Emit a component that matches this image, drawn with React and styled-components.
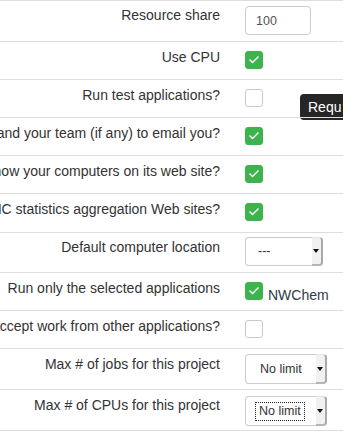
import React from "react";
import styled, { createGlobalStyle } from "styled-components";

const Global = createGlobalStyle`
  html, body { margin: 0; padding: 0; background: #fff; overflow: hidden; }
  body { font-family: "Liberation Sans", Arial, sans-serif; font-size: 14px; color: #333; }
`;

const Table = styled.div`
  width: 343px;
  overflow: hidden;
  border-bottom: 1px solid #ddd;
`;

const Row = styled.div`
  position: relative;
  display: grid;
  grid-template-columns: 237px 1fr;
  height: ${(p) => p.$h}px;
  border-top: 1px solid #ddd;
  box-sizing: content-box;
`;

const Label = styled.div`
  display: flex;
  justify-content: flex-end;
  overflow: hidden;
  padding: ${(p) => p.$pt ?? 5}px 17px 0 0;
  line-height: 20px;
  white-space: nowrap;
  color: #333;
`;

const Control = styled.div`
  display: flex;
  align-items: flex-start;
  padding: ${(p) => p.$pt}px 0 0 8px;
  min-width: 0;
`;

const TextInput = styled.div`
  box-sizing: border-box;
  width: 66px;
  height: 29px;
  border: 1px solid #ccc;
  border-radius: 4px;
  padding: 0 10px;
  font-size: 12.5px;
  line-height: 28px;
  color: #555;
`;

const Box = styled.span`
  box-sizing: border-box;
  display: inline-flex;
  align-items: center;
  justify-content: center;
  width: 18px;
  height: 18px;
  flex: none;
  border-radius: 3px;
  background: ${(p) => (p.$on ? "#3cb44b" : "#fff")};
  border: 1px solid ${(p) => (p.$on ? "#3cb44b" : "#c5cad1")};
`;

const CheckLabel = styled.span`
  margin: 3px 0 0 5px;
  line-height: 20px;
  color: #2d3a4a;
`;

const SelectBox = styled.div`
  box-sizing: border-box;
  display: flex;
  width: ${(p) => p.$w}px;
  height: ${(p) => p.$hgt}px;
  border: 1px solid #ccc;
  border-right: none;
  border-radius: 4px;
  background: #fff;
  font-size: 12.5px;
`;

const SelectValue = styled.div`
  flex: 1;
  display: flex;
  align-items: center;
  padding-left: ${(p) => p.$pl}px;
  color: #333;
`;

const FocusText = styled.span`
  line-height: 17px;
  padding: 0 ${(p) => (p.$focus ? 3 : 0)}px;
  outline: ${(p) => (p.$focus ? "1px dotted #222" : "none")};
`;

const Arrow = styled.div`
  width: 8px;
  margin-top: -1px;
  margin-bottom: -1px;
  display: flex;
  align-items: center;
  justify-content: flex-start;
  padding-left: 1px;
  background: #f1f1f1;
  border-right: 2px solid #a9a9a9;
  border-bottom: 2px solid #b5b5b5;
  border-top: 1px solid #e4e4e4;
  border-radius: 0 4px 4px 0;
  &::after {
    content: "";
    border-left: 3px solid transparent;
    border-right: 3px solid transparent;
    border-top: 4px solid #111;
  }
`;

const Tooltip = styled.div`
  position: absolute;
  top: 14px;
  left: 300px;
  height: 26px;
  padding: 0 10px 0 8px;
  line-height: 26px;
  background: #262626;
  color: #fff;
  border-radius: 4px;
  white-space: nowrap;
`;

const Check = ({ on }) => (
  <Box $on={on}>
    {on && (
      <svg width="12" height="10" viewBox="0 0 12 10">
        <path d="M1.5 4.5 L4.5 7.5 L10.5 1.5" fill="none" stroke="#fff" strokeWidth="1.4" />
      </svg>
    )}
  </Box>
);

const Select = ({ value, w, h, pl, focus }) => (
  <SelectBox $w={w} $hgt={h}>
    <SelectValue $pl={pl}>
      <FocusText $focus={focus}>{value}</FocusText>
    </SelectValue>
    <Arrow />
  </SelectBox>
);

const rows = [
  { label: "Resource share", h: 40, lpt: 4, pt: 5, c: <TextInput>100</TextInput> },
  { label: "Use CPU", h: 37, pt: 9, c: <Check on /> },
  { label: "Run test applications?", h: 37, pt: 9, c: <Check />, tip: "Requ" },
  { label: "Is it OK for BOINC project and your team (if any) to email you?", h: 37, pt: 9, c: <Check on /> },
  { label: "Should BOINC project show your computers on its web site?", h: 37, pt: 9, c: <Check on /> },
  { label: "Should BOINC project export statistics to BOINC statistics aggregation Web sites?", h: 38, pt: 9, c: <Check on /> },
  { label: "Default computer location", h: 39, lpt: 4, pt: 4, c: <Select value="---" w={78} h={29} pl={12} /> },
  {
    label: "Run only the selected applications",
    h: 37,
    pt: 9,
    c: (
      <>
        <Check on />
        <CheckLabel>NWChem</CheckLabel>
      </>
    ),
  },
  { label: "If no work for selected applications is available, accept work from other applications?", h: 37, pt: 9, c: <Check /> },
  { label: "Max # of jobs for this project", h: 40, lpt: 5, pt: 5, c: <Select value="No limit" w={82} h={30} pl={14} /> },
  { label: "Max # of CPUs for this project", h: 40, lpt: 5, pt: 6, c: <Select value="No limit" w={82} h={30} pl={10} focus /> },
];

export default function App() {
  return (
    <>
      <Global />
      <Table>
        {rows.map((r, i) => (
          <Row key={i} $h={r.h}>
            <Label $pt={r.lpt}>
              <span>{r.label}</span>
            </Label>
            <Control $pt={r.pt}>{r.c}</Control>
            {r.tip && <Tooltip>{r.tip}</Tooltip>}
          </Row>
        ))}
      </Table>
    </>
  );
}
